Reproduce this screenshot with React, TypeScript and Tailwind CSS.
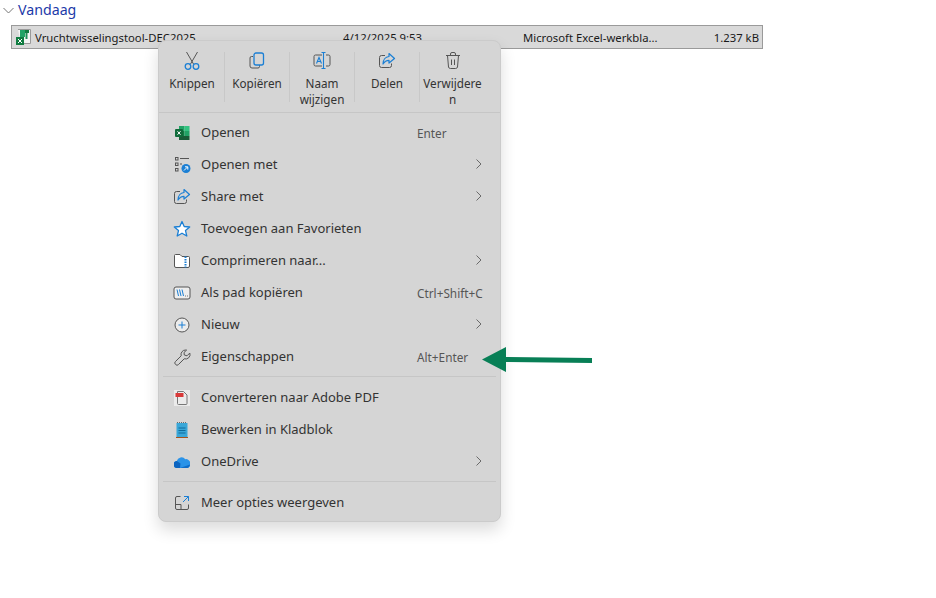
import React from "react";

function ExcelFile() {
  return (
    <svg width="18" height="18" viewBox="0 0 18 18" className="shrink-0">
      <path d="M3 1.500h12.500v14H6" fill="#f4f4f4" stroke="#9a9a9a" />
      <rect x="5" y="2" width="5" height="7" fill="#21a366" />
      <rect x="10" y="2" width="4" height="3" fill="#107c41" />
      <rect x="10.500" y="5" width="2" height="6" fill="#1f8f57" />
      <rect x="1" y="9" width="8" height="8" fill="#107c41" />
      <path d="M3 11l4 4M7 11l-4 4" stroke="#fff" strokeWidth="1" />
    </svg>
  );
}

function Chevron() {
  return (
    <svg width="8" height="12" viewBox="0 0 8 12" fill="none" stroke="#6a6a6a" strokeWidth="1">
      <path d="M1.500 1.500 6 6l-4.500 4.500" />
    </svg>
  );
}

const gray = "#555";
const blue = "#1b7fd4";

const Scissors = () => (
  <svg width="18" height="20" viewBox="0 0 18 20" fill="none">
    <path d="M3.500 1 10.500 13M14.500 1 7.500 13" stroke={gray} />
    <circle cx="5" cy="15.500" r="2.800" stroke={blue} strokeWidth="1.300" />
    <circle cx="13" cy="15.500" r="2.800" stroke={blue} strokeWidth="1.300" />
  </svg>
);
const CopyIcon = () => (
  <svg width="18" height="20" viewBox="0 0 18 20" fill="none">
    <path d="M5 5.500H3.500A1.500 1.500 0 0 0 2 7v8a2 2 0 0 0 2 2h6a1.500 1.500 0 0 0 1.500-1.500V14" stroke={gray} />
    <rect x="6" y="2" width="9.500" height="12" rx="2" stroke={blue} strokeWidth="1.300" />
  </svg>
);
const RenameIcon = () => (
  <svg width="18" height="20" viewBox="0 0 18 20" fill="none">
    <path d="M9 4H2.500A1.500 1.500 0 0 0 1 5.500v8A1.500 1.500 0 0 0 2.500 15H9M13 4h2.500A1.500 1.500 0 0 1 17 5.500v8a1.500 1.500 0 0 1-1.500 1.500H13" stroke={gray} />
    <path d="M8.500 1.500h4M8.500 17.500h4M10.500 1.500v16" stroke={blue} strokeWidth="1.100" />
    <path d="M3.500 12.500 6 6.500l2.500 6M4.500 10.500h3" stroke={blue} strokeWidth="1.100" />
  </svg>
);
const ShareIcon = () => (
  <svg width="18" height="20" viewBox="0 0 18 20" fill="none">
    <path d="M7 4.500H3.500A2 2 0 0 0 1.500 6.500v8a2 2 0 0 0 2 2h8a2 2 0 0 0 2-2v-2" stroke={gray} />
    <path d="M11 2.500 16.500 7.500 11 12v-2.700C8.500 9.300 6.500 10.500 5 13c0-4 2.500-7 6-7.500z" stroke={blue} strokeWidth="1.200" strokeLinejoin="round" />
  </svg>
);
const TrashIcon = () => (
  <svg width="18" height="20" viewBox="0 0 18 20" fill="none" stroke={gray}>
    <path d="M2 4.500h14M6.500 4.500V3a1.500 1.500 0 0 1 1.500-1.500h2A1.500 1.500 0 0 1 11.500 3v1.500" />
    <path d="M3.500 4.500 4.500 16a2 2 0 0 0 2 1.500h5a2 2 0 0 0 2-1.500l1-11.500" />
    <path d="M7.500 8.500v5.500M10.500 8.500v5.500" />
  </svg>
);

const ExcelApp = () => (
  <svg width="16" height="16" viewBox="0 0 16 16">
    <rect x="5" y="1" width="5.500" height="5" fill="#21a366" />
    <rect x="10.500" y="1" width="5" height="5" fill="#33c481" />
    <rect x="5" y="6" width="5.500" height="5" fill="#107c41" />
    <rect x="10.500" y="6" width="5" height="5" fill="#21a366" />
    <rect x="5" y="11" width="10.500" height="4" fill="#185c37" />
    <rect x="1" y="4" width="8" height="8" rx="1" fill="#0f6b3a" />
    <path d="M3.500 6.300l3 3.400M6.500 6.300l-3 3.400" stroke="#fff" strokeWidth="1" />
  </svg>
);
const OpenWith = () => (
  <svg width="17" height="18" viewBox="0 0 17 18" fill="none">
    <rect x="1.500" y="1.500" width="2.500" height="2.500" stroke={gray} />
    <path d="M6 2.500h9" stroke={gray} />
    <rect x="1.500" y="7" width="2.500" height="2.500" stroke={gray} />
    <path d="M6 8h2" stroke={gray} />
    <rect x="1.500" y="12.500" width="2.500" height="2.500" stroke={gray} />
    <circle cx="12" cy="12.500" r="4.500" fill={blue} />
    <path d="M10 14.500l3.500-3.500M11 10.800h2.800v2.800" stroke="#fff" strokeWidth="1" />
  </svg>
);
const Star = () => (
  <svg width="18" height="18" viewBox="0 0 18 18" fill="#fff" stroke={blue} strokeWidth="1.300" strokeLinejoin="round">
    <path d="M9 1.500 11.200 6.500 16.700 7 12.500 10.600 13.800 16 9 13.200 4.200 16 5.500 10.600 1.300 7 6.800 6.500z" />
  </svg>
);
const Zip = () => (
  <svg width="18" height="16" viewBox="0 0 18 16" fill="none">
    <path d="M1.500 13V2.500A1 1 0 0 1 2.500 1.500H7l2 2h6.500a1 1 0 0 1 1 1V13a1.500 1.500 0 0 1-1.500 1.500H3A1.500 1.500 0 0 1 1.500 13z" fill="#fff" stroke={gray} />
    <path d="M12.500 3.500v11" stroke={blue} strokeWidth="2" strokeDasharray="1.500 1" />
  </svg>
);
const PathIcon = () => (
  <svg width="18" height="16" viewBox="0 0 18 16" fill="none">
    <rect x="1" y="2" width="16" height="12" rx="2" stroke={gray} fill="#eee" />
    <path d="M4 4.500 5.500 11M6.500 4.500 8 11M9 4.500l1.500 6.500" stroke={blue} />
    <path d="M12 11h.8M14 11h.8" stroke={gray} />
  </svg>
);
const Plus = () => (
  <svg width="16" height="16" viewBox="0 0 16 16" fill="#ececec">
    <circle cx="8" cy="8" r="7" stroke={gray} />
    <path d="M8 4.500v7M4.500 8h7" stroke={blue} />
  </svg>
);
const Wrench = () => (
  <svg width="17" height="17" viewBox="0 0 17 17" fill="none" stroke={gray}>
    <path d="M11.500 1a4.500 4.500 0 0 0-4.300 5.800L1.400 12.600a1.900 1.900 0 0 0 0 2.700l.3.300a1.900 1.900 0 0 0 2.700 0l5.800-5.800A4.500 4.500 0 0 0 15.800 4L13 6.800 10.300 6 10 3.500 12.600 1.100z" strokeLinejoin="round" />
  </svg>
);
const PdfIcon = () => (
  <span className="flex h-4 w-4 items-center justify-center bg-[#ebebeb]">
    <svg width="14" height="16" viewBox="0 0 14 16" fill="none">
      <path d="M2.500 1.500h6l3.500 3.500v8.500a1 1 0 0 1-1 1H3.500a1 1 0 0 1-1-1z" stroke="#777" />
      <rect x="0.500" y="3" width="8" height="4" fill="#d93a3a" />
    </svg>
  </span>
);
const Notepad = () => (
  <svg width="12" height="16" viewBox="0 0 12 16">
    <rect x="0.500" y="1" width="11" height="14" fill="#3aa7d8" />
    <rect x="0" y="15" width="12" height="1" fill="#a5531d" />
    <path d="M1.500 1v-1M3.500 1v-1M5.500 1v-1M7.500 1v-1M9.500 1v-1" stroke="#6a6a6a" />
    <path d="M2.500 6h7M2.500 8.500h7M2.500 11h7" stroke="#0e6b9c" />
  </svg>
);
const Cloud = () => (
  <svg width="16" height="11" viewBox="0 0 16 11">
    <path d="M3.500 11A3.500 3.500 0 0 1 2.800 4 4.800 4.800 0 0 1 11.300 2.200 4.200 4.200 0 0 1 16 7.800C16 9.600 14.600 11 13 11z" fill="#2a93e8" />
    <path d="M6 11 16 7.500C16 9.500 14.600 11 13 11z" fill="#0f6cc8" />
    <path d="M3.500 11A3.500 3.500 0 0 1 2.800 4L6.500 6.500 6 11z" fill="#0c64c0" />
  </svg>
);
const MoreIcon = () => (
  <svg width="16" height="16" viewBox="0 0 16 16" fill="none">
    <path d="M6.500 1.500H3A1.500 1.500 0 0 0 1.500 3v10A1.500 1.500 0 0 0 3 14.500h10a1.500 1.500 0 0 0 1.500-1.500V9.500" stroke={gray} />
    <path d="M1.500 9.500H7v5" stroke={gray} />
    <path d="M9 7l5.500-5.500M10 1.500h4.500V6" stroke={blue} />
  </svg>
);

function ToolButton({ icon, label, last }: { icon: React.ReactNode; label: React.ReactNode; last?: boolean }) {
  return (
    <div className={`flex h-[50px] w-[65px] flex-col items-center ${last ? "" : "border-r border-[#c8c8c8]"}`}>
      <div className="flex h-[20px] w-full -translate-y-[1px] items-center justify-center">{icon}</div>
      <div className="mt-[3px] w-[61px] break-all text-center text-[11.7px] leading-[16px] text-[#333]">{label}</div>
    </div>
  );
}

function Item({ icon, label, hint, arrow }: { icon: React.ReactNode; label: string; hint?: string; arrow?: boolean }) {
  return (
    <div className="flex h-[32px] items-center">
      <div className="flex w-[18px] shrink-0 items-center justify-center">{icon}</div>
      <div className="ml-[10px] flex-1 whitespace-nowrap text-[13px] text-[#333]">{label}</div>
      {hint && <div className="mr-[1px] mt-[1px] w-[68px] whitespace-nowrap text-[11.8px] text-[#555]">{hint}</div>}
      {arrow && <div className="mr-[3px] flex h-[12px] w-[8px] -translate-y-[1px] items-center"><Chevron /></div>}
    </div>
  );
}

function Sep() {
  return <div className="mx-[4px] h-px bg-[#c6c6c6]" />;
}

export default function App() {
  return (
    <div
      className="relative h-[598px] w-[936px] overflow-hidden bg-white"
      style={{ fontFamily: '"Noto Sans", "Open Sans", sans-serif' }}
    >
      <div className="flex h-[20px] items-center pl-[3px]">
        <svg width="11" height="7" viewBox="0 0 11 7" fill="none" stroke="#777" strokeWidth="1">
          <path d="M.5 1 5.500 6l5-5" />
        </svg>
        <span className="ml-[4px] text-[14.2px] leading-[20px] text-[#1c3aa9]">Vandaag</span>
      </div>
      <div className="ml-[11px] mt-[5px] flex h-[24px] w-[752px] items-center border border-[#9a9a9a] bg-[#d9d9d9] pt-[2px] text-[11.3px] text-[#1a1a1a]">
        <div className="ml-[3px] flex w-[328px] items-center">
          <span className="-mt-[2px] flex"><ExcelFile /></span>
          <span className="ml-[2px]">Vruchtwisselingstool-DEC2025</span>
        </div>
        <div className="w-[180px]">4/12/2025 9:53</div>
        <div className="w-[165px] whitespace-nowrap">Microsoft Excel-werkbla...</div>
        <div className="flex-1 pr-[3px] text-right">1.237 kB</div>
      </div>

      <div className="absolute left-[158px] top-[40px] w-[343px] rounded-[8px] border border-[#cbcbcb] bg-[#d5d5d5] shadow-[0_8px_16px_rgba(0,0,0,0.14)]">
        <div className="flex h-[71px] items-start pl-[1px] pt-[11px]">
          <ToolButton icon={<Scissors />} label="Knippen" />
          <ToolButton icon={<CopyIcon />} label="Kopiëren" />
          <ToolButton icon={<RenameIcon />} label={<>Naam<br />wijzigen</>} />
          <ToolButton icon={<ShareIcon />} label="Delen" />
          <ToolButton icon={<TrashIcon />} label="Verwijderen" last />
        </div>
        <div className="h-px bg-[#c6c6c6]" />
        <div className="px-[14px] pt-[4px] pb-[3px]">
          <Item icon={<ExcelApp />} label="Openen" hint="Enter" />
          <Item icon={<OpenWith />} label="Openen met" arrow />
          <Item icon={<ShareIcon />} label="Share met" arrow />
          <Item icon={<Star />} label="Toevoegen aan Favorieten" />
          <Item icon={<Zip />} label="Comprimeren naar..." arrow />
          <Item icon={<PathIcon />} label="Als pad kopiëren" hint="Ctrl+Shift+C" />
          <Item icon={<Plus />} label="Nieuw" arrow />
          <Item icon={<Wrench />} label="Eigenschappen" hint="Alt+Enter" />
        </div>
        <Sep />
        <div className="px-[14px] pt-[5px] pb-[3px]">
          <Item icon={<PdfIcon />} label="Converteren naar Adobe PDF" />
          <Item icon={<Notepad />} label="Bewerken in Kladblok" />
          <Item icon={<Cloud />} label="OneDrive" arrow />
        </div>
        <Sep />
        <div className="px-[14px] pt-[5px] pb-[2px]">
          <Item icon={<MoreIcon />} label="Meer opties weergeven" />
        </div>
      </div>

      <svg className="absolute left-[481px] top-[346px]" width="112" height="27" viewBox="0 0 112 27">
        <path d="M1 13.500 25 1V11L111 12V17L25 16V26z" fill="#087f56" />
      </svg>
    </div>
  );
}
